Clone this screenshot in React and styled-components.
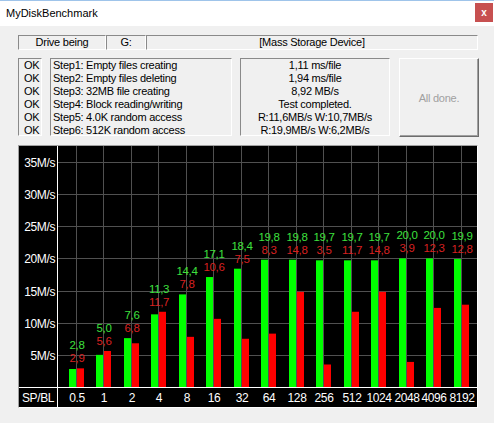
import React from "react";
import styled, { createGlobalStyle } from "styled-components";

const GlobalStyle = createGlobalStyle`
  html, body {
    margin: 0;
    padding: 0;
    background: #f0f0f0;
  }
  body {
    font-family: "Liberation Sans", Arial, sans-serif;
  }
`;

const Window = styled.div`
  width: 494px;
  height: 423px;
  box-sizing: border-box;
  border-top: 1px solid #9fc4ea;
  background: #f0f0f0;
  overflow: hidden;
  font-size: 11px;
  letter-spacing: -0.25px;
  color: #000;
`;

const TitleBar = styled.div`
  height: 25px;
  background: #fff;
  display: flex;
  justify-content: space-between;
  align-items: flex-start;
`;

const Title = styled.span`
  font-size: 11px;
  letter-spacing: 0;
  line-height: 25px;
  padding-left: 6px;
`;

const CloseButton = styled.div`
  width: 18px;
  height: 19px;
  margin: 2px 1px 0 0;
  background: #c75050;
  color: #fff;
  font-weight: bold;
  font-size: 10px;
  display: flex;
  align-items: center;
  justify-content: center;
`;

const Content = styled.div`
  padding: 9px 0 0 18px;
  display: flex;
  flex-direction: column;
`;

const sunken = `
  box-sizing: border-box;
  border-top: 1px solid #8a8a8a;
  border-left: 1px solid #8a8a8a;
  border-right: 1px solid #fff;
  border-bottom: 1px solid #fff;
`;

const HeaderRow = styled.div`
  display: flex;
  height: 15px;
`;

const HeaderCell = styled.div`
  ${sunken}
  width: ${p => p.$w}px;
  line-height: 13px;
  text-align: center;
`;

const InfoRow = styled.div`
  display: flex;
  margin-top: 8px;
  height: 79px;
  align-items: flex-start;
`;

const TextBox = styled.div`
  ${sunken}
  width: ${p => p.$w}px;
  height: 78px;
  margin-right: ${p => p.$gap || 0}px;
  line-height: 13px;
  text-align: ${p => p.$align || "left"};
  padding-left: ${p => p.$pad || 0}px;
  white-space: nowrap;
  overflow: hidden;
`;

const DoneButton = styled.div`
  box-sizing: border-box;
  width: 80px;
  height: 79px;
  border-top: 1px solid #fff;
  border-left: 1px solid #fff;
  border-right: 1px solid #6d6d6d;
  border-bottom: 1px solid #6d6d6d;
  box-shadow: inset -1px -1px 0 #a0a0a0;
  color: #a0a0a0;
  display: flex;
  align-items: center;
  justify-content: center;
`;

const ChartFrame = styled.div`
  margin-top: 8px;
  width: 460px;
  height: 263px;
  box-sizing: border-box;
  border-top: 1px solid #a0a0a0;
  border-left: 1px solid #a0a0a0;
  border-right: 1px solid #fff;
  border-bottom: 1px solid #fff;
  background: #000;

  svg {
    display: block;
    font-family: "Liberation Sans", Arial, sans-serif;
    font-size: 12px;
    letter-spacing: -0.4px;
  }
`;

const steps = [
  "Step1: Empty files creating",
  "Step2: Empty files deleting",
  "Step3: 32MB file creating",
  "Step4: Block reading/writing",
  "Step5: 4.0K random access",
  "Step6: 512K random access",
];

const results = [
  "1,11 ms/file",
  "1,94 ms/file",
  "8,92 MB/s",
  "Test completed.",
  "R:11,6MB/s W:10,7MB/s",
  "R:19,9MB/s W:6,2MB/s",
];

const cats = ["0.5", "1", "2", "4", "8", "16", "32", "64", "128", "256", "512", "1024", "2048", "4096", "8192"];
const reads = [2.8, 5.0, 7.6, 11.3, 14.4, 17.1, 18.4, 19.8, 19.8, 19.7, 19.7, 19.7, 20.0, 20.0, 19.9];
const writes = [2.9, 5.6, 6.8, 11.7, 7.8, 10.6, 7.5, 8.3, 14.8, 3.5, 11.7, 14.8, 3.9, 12.3, 12.8];

const W = 458;
const H = 261;
const AXIS_X = 38;
const BASE = 241;
const PX = 6.43;
const colX = i => 56.5 + 27.5 * i;
const fmt = v => v.toFixed(1).replace(".", ",");

const Chart = () => (
  <svg width={W} height={H}>
    {[5, 10, 15, 20, 25, 30, 35].map(v => {
      const y = Math.round(BASE - v * PX) + 0.5;
      return (
        <g key={v}>
          <line x1={AXIS_X} x2={W} y1={y} y2={y} stroke="#505050" />
          <text x={36} y={y} fill="#fff" textAnchor="end" dominantBaseline="central">
            {v}M/s
          </text>
        </g>
      );
    })}
    {cats.map((c, i) => (
      <line key={c} x1={Math.round(colX(i)) + 0.5} x2={Math.round(colX(i)) + 0.5} y1={0} y2={BASE} stroke="#505050" />
    ))}
    {cats.map((c, i) => {
      const cx = Math.round(colX(i));
      const gh = reads[i] * PX;
      const rh = writes[i] * PX;
      const top = BASE - Math.max(gh, rh);
      return (
        <g key={c}>
          <rect x={cx - 7} y={BASE - gh} width={7} height={gh} fill="#00ff00" />
          <rect x={cx + 1} y={BASE - rh} width={7} height={rh} fill="#ff0000" />
          <text x={cx + 1} y={top - 23} fill="#3ee03e" fontSize="11.5" textAnchor="middle" dominantBaseline="central">
            {fmt(reads[i])}
          </text>
          <text x={cx + 1} y={top - 10} fill="#d82020" fontSize="11.5" textAnchor="middle" dominantBaseline="central">
            {fmt(writes[i])}
          </text>
          <text x={cx + 1} y={252} fill="#fff" textAnchor="middle" dominantBaseline="central">
            {c}
          </text>
        </g>
      );
    })}
    <line x1={0} x2={W} y1={BASE + 0.5} y2={BASE + 0.5} stroke="#fff" />
    <line x1={AXIS_X + 0.5} x2={AXIS_X + 0.5} y1={0} y2={H} stroke="#fff" />
    <text x={19} y={252} fill="#fff" textAnchor="middle" dominantBaseline="central">
      SP/BL
    </text>
  </svg>
);

export default function App() {
  return (
    <>
      <GlobalStyle />
      <Window>
        <TitleBar>
          <Title>MyDiskBenchmark</Title>
          <CloseButton>x</CloseButton>
        </TitleBar>
        <Content>
          <HeaderRow>
            <HeaderCell $w={88}>Drive being</HeaderCell>
            <HeaderCell $w={40}>G:</HeaderCell>
            <HeaderCell $w={332}>[Mass Storage Device]</HeaderCell>
          </HeaderRow>
          <InfoRow>
            <TextBox $w={24} $gap={8} $pad={5}>
              {steps.map((s, i) => (
                <div key={i}>OK</div>
              ))}
            </TextBox>
            <TextBox $w={182} $gap={8} $pad={2}>
              {steps.map(s => (
                <div key={s}>{s}</div>
              ))}
            </TextBox>
            <TextBox $w={150} $gap={9} $align="center">
              {results.map(r => (
                <div key={r}>{r}</div>
              ))}
            </TextBox>
            <DoneButton>All done.</DoneButton>
          </InfoRow>
          <ChartFrame>
            <Chart />
          </ChartFrame>
        </Content>
      </Window>
    </>
  );
}
